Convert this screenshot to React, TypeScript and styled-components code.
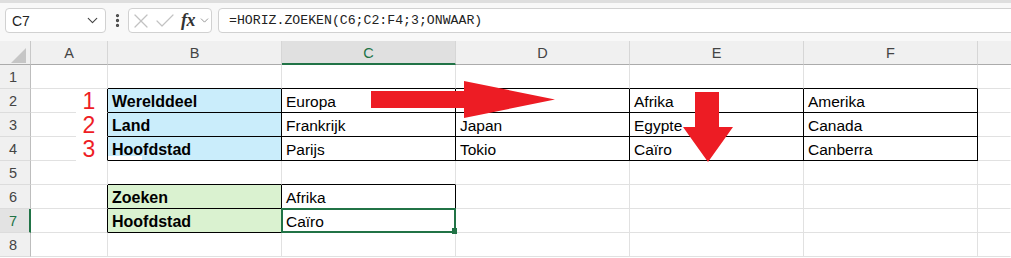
import React from "react";
import styled, { createGlobalStyle, css } from "styled-components";
import { ChevronDown, X, Check, EllipsisVertical } from "lucide-react";

const GREEN = "#217346";
const GRID = "#e1e1e1";

const Global = createGlobalStyle`
  * { box-sizing: border-box; }
  html, body { margin: 0; padding: 0; background: #ffffff; overflow: hidden; }
  body { font-family: "Liberation Sans", Arial, sans-serif; }
`;

const Page = styled.div`
  width: 1011px;
  height: 258px;
  overflow: hidden;
  background: #ffffff;
`;

const FormulaBar = styled.div`
  display: flex;
  align-items: center;
  height: 41px;
  border-top: 3px solid #dedede;
  padding: 5px 0 8px 5px;
  background: #f8f8f8;
  width: 1030px;
`;

const Box = styled.div`
  height: 25px;
  background: #ffffff;
  border: 1px solid #d1d1d1;
  border-radius: 4px;
  display: flex;
  align-items: center;
`;

const NameBox = styled(Box)`
  width: 101px;
  justify-content: space-between;
  padding: 0 4px 0 6px;
  font-size: 14px;
  color: #222;
`;

const Dots = styled.div`
  width: 22px;
  display: flex;
  justify-content: center;
  color: #444;
`;

const FxGroup = styled(Box)`
  width: 84px;
  padding-left: 0;
  color: #c2c2c2;
`;

const IconSlot = styled.div`
  width: 24px;
  display: flex;
  justify-content: center;
  align-items: center;
`;

const FxText = styled.span`
  font-family: "Liberation Serif", "Times New Roman", serif;
  font-style: italic;
  font-weight: bold;
  font-size: 18px;
  color: #333;
  margin-left: 4px;
  letter-spacing: -0.5px;
`;

const FormulaInput = styled(Box)`
  flex: 1;
  margin-left: 6px;
  padding-left: 10px;
  font-family: "Liberation Mono", "DejaVu Sans Mono", monospace;
  font-size: 13.2px;
  color: #222;
`;

const Sheet = styled.div`
  position: relative;
  display: grid;
  grid-template-columns: 31px 77px repeat(5, 174px) 1fr;
  grid-auto-rows: 24px;
`;

const Corner = styled.div`
  display: flex;
  justify-content: flex-end;
  align-items: flex-end;
  padding: 0 4px 1px 0;
  background: #f0f0f0;
  border-right: 1px solid #c8c8c8;
  border-bottom: 1px solid #ababab;
`;

const ColHeader = styled.div<{ $selected?: boolean; $last?: boolean }>`
  display: flex;
  align-items: center;
  justify-content: center;
  font-size: 14.5px;
  color: #444;
  background: #f0f0f0;
  border-bottom: 1px solid #ababab;
  border-right: ${(p) => (p.$last ? "none" : "1px solid #d6d6d6")};
  ${(p) =>
    p.$selected &&
    css`
      background: #e0e0e0;
      color: ${GREEN};
      border-bottom: 2px solid ${GREEN};
      padding-top: 1px;
    `}
`;

const RowHeader = styled.div<{ $selected?: boolean }>`
  display: flex;
  align-items: center;
  justify-content: center;
  padding-right: 4px;
  font-size: 14.5px;
  color: #444;
  background: #f0f0f0;
  border-right: 1px solid #bdbdbd;
  border-bottom: 1px solid #dcdcdc;
  ${(p) =>
    p.$selected &&
    css`
      background: #e3e3e3;
      color: ${GREEN};
      border-right: 2px solid ${GREEN};
      padding-right: 3px;
    `}
`;

const Cell = styled.div<{
  $fill?: string;
  $bold?: boolean;
  $right: string;
  $bottom: string;
  $selected?: boolean;
}>`
  position: relative;
  display: flex;
  align-items: flex-end;
  padding: 0 4px 1px 4px;
  font-size: ${(p) => (p.$bold ? "16px" : "15.5px")};
  color: #000;
  white-space: nowrap;
  font-weight: ${(p) => (p.$bold ? 700 : 400)};
  background: ${(p) => p.$fill ?? "transparent"};
  border-right: 1px solid ${(p) => p.$right};
  border-bottom: 1px solid ${(p) => p.$bottom};
  ${(p) =>
    p.$selected &&
    css`
      &::after {
        content: "";
        position: absolute;
        top: -1px;
        left: -1px;
        right: -1px;
        bottom: -1px;
        border: 2px solid ${GREEN};
        z-index: 2;
      }
      &::before {
        content: "";
        position: absolute;
        right: -2px;
        bottom: -2px;
        width: 5px;
        height: 6px;
        background: ${GREEN};
        z-index: 3;
      }
    `}
`;

const NumberBox = styled.div`
  position: absolute;
  left: 76px;
  top: 48px;
  width: 31px;
  height: 72px;
  background: #ffffff;
  display: flex;
  flex-direction: column;
  align-items: center;
  padding-right: 5px;
  color: #ee1d25;
  font-size: 23px;
  line-height: 24px;
  z-index: 4;
`;

const Notch = styled.div`
  position: absolute;
  left: 108px;
  top: 115px;
  width: 34px;
  height: 4px;
  background: #ffffff;
  z-index: 4;
`;

const ArrowShape = styled.svg<{ $left: number; $top: number }>`
  position: absolute;
  left: ${(p) => p.$left}px;
  top: ${(p) => p.$top}px;
  z-index: 5;
  overflow: visible;
`;

const BLUE = "#caedfb";
const LGREEN = "#daf2d0";

type CellData = { text?: string; bold?: boolean; fill?: string };

const data: Record<number, CellData[]> = {
  2: [
    {},
    { text: "Werelddeel", bold: true, fill: BLUE },
    { text: "Europa" },
    {},
    { text: "Afrika" },
    { text: "Amerika" },
  ],
  3: [
    {},
    { text: "Land", bold: true, fill: BLUE },
    { text: "Frankrijk" },
    { text: "Japan" },
    { text: "Egypte" },
    { text: "Canada" },
  ],
  4: [
    {},
    { text: "Hoofdstad", bold: true, fill: BLUE },
    { text: "Parijs" },
    { text: "Tokio" },
    { text: "Caïro" },
    { text: "Canberra" },
  ],
  6: [{}, { text: "Zoeken", bold: true, fill: LGREEN }, { text: "Afrika" }],
  7: [{}, { text: "Hoofdstad", bold: true, fill: LGREEN }, { text: "Caïro" }],
};

const inTable = (r: number, c: number) =>
  (c >= 1 && c <= 5 && r >= 2 && r <= 4) || (c >= 1 && c <= 2 && r >= 6 && r <= 7);

const cols = ["A", "B", "C", "D", "E", "F"];
const rows = [1, 2, 3, 4, 5, 6, 7, 8];

export default function App() {
  return (
    <Page>
      <Global />
      <FormulaBar>
        <NameBox>
          <span>C7</span>
          <ChevronDown size={17} strokeWidth={1.6} color="#444" />
        </NameBox>
        <Dots>
          <EllipsisVertical size={17} strokeWidth={2.6} />
        </Dots>
        <FxGroup>
          <IconSlot>
            <X size={24} strokeWidth={1.2} />
          </IconSlot>
          <IconSlot>
            <Check size={24} strokeWidth={1.2} />
          </IconSlot>
          <FxText>fx</FxText>
          <ChevronDown size={13} strokeWidth={1.6} color="#888" style={{ marginLeft: 3 }} />
        </FxGroup>
        <FormulaInput>=HORIZ.ZOEKEN(C6;C2:F4;3;ONWAAR)</FormulaInput>
      </FormulaBar>

      <Sheet>
        <Corner>
          <svg width="15" height="15" viewBox="0 0 15 15">
            <polygon points="15,0 15,15 0,15" fill="#c6c6c6" />
          </svg>
        </Corner>
        {cols.map((c) => (
          <ColHeader key={c} $selected={c === "C"}>
            {c}
          </ColHeader>
        ))}
        <ColHeader $last />

        {rows.map((r) => (
          <React.Fragment key={r}>
            <RowHeader $selected={r === 7}>{r}</RowHeader>
            {[0, 1, 2, 3, 4, 5, 6].map((c) => {
              const d = data[r]?.[c] ?? {};
              const right =
                c === 6 ? "transparent" : inTable(r, c) || inTable(r, c + 1) ? "#000" : GRID;
              const bottom = inTable(r, c) || inTable(r + 1, c) ? "#000" : GRID;
              return (
                <Cell
                  key={c}
                  $fill={d.fill}
                  $bold={d.bold}
                  $right={right}
                  $bottom={bottom}
                  $selected={r === 7 && c === 2}
                >
                  {d.text}
                </Cell>
              );
            })}
          </React.Fragment>
        ))}

        <NumberBox>
          <span>1</span>
          <span>2</span>
          <span>3</span>
        </NumberBox>
        <Notch />

        <ArrowShape $left={371} $top={40} width="185" height="37" viewBox="0 0 185 37">
          <polygon points="0,10 93,10 93,0 184,18.5 93,37 93,27 0,27" fill="#ed1c24" />
        </ArrowShape>
        <ArrowShape $left={683} $top={51} width="50" height="71" viewBox="0 0 50 71">
          <polygon points="12,0 36,0 36,35 50,35 25,70 0,35 12,35" fill="#ed1c24" />
        </ArrowShape>
      </Sheet>
    </Page>
  );
}
